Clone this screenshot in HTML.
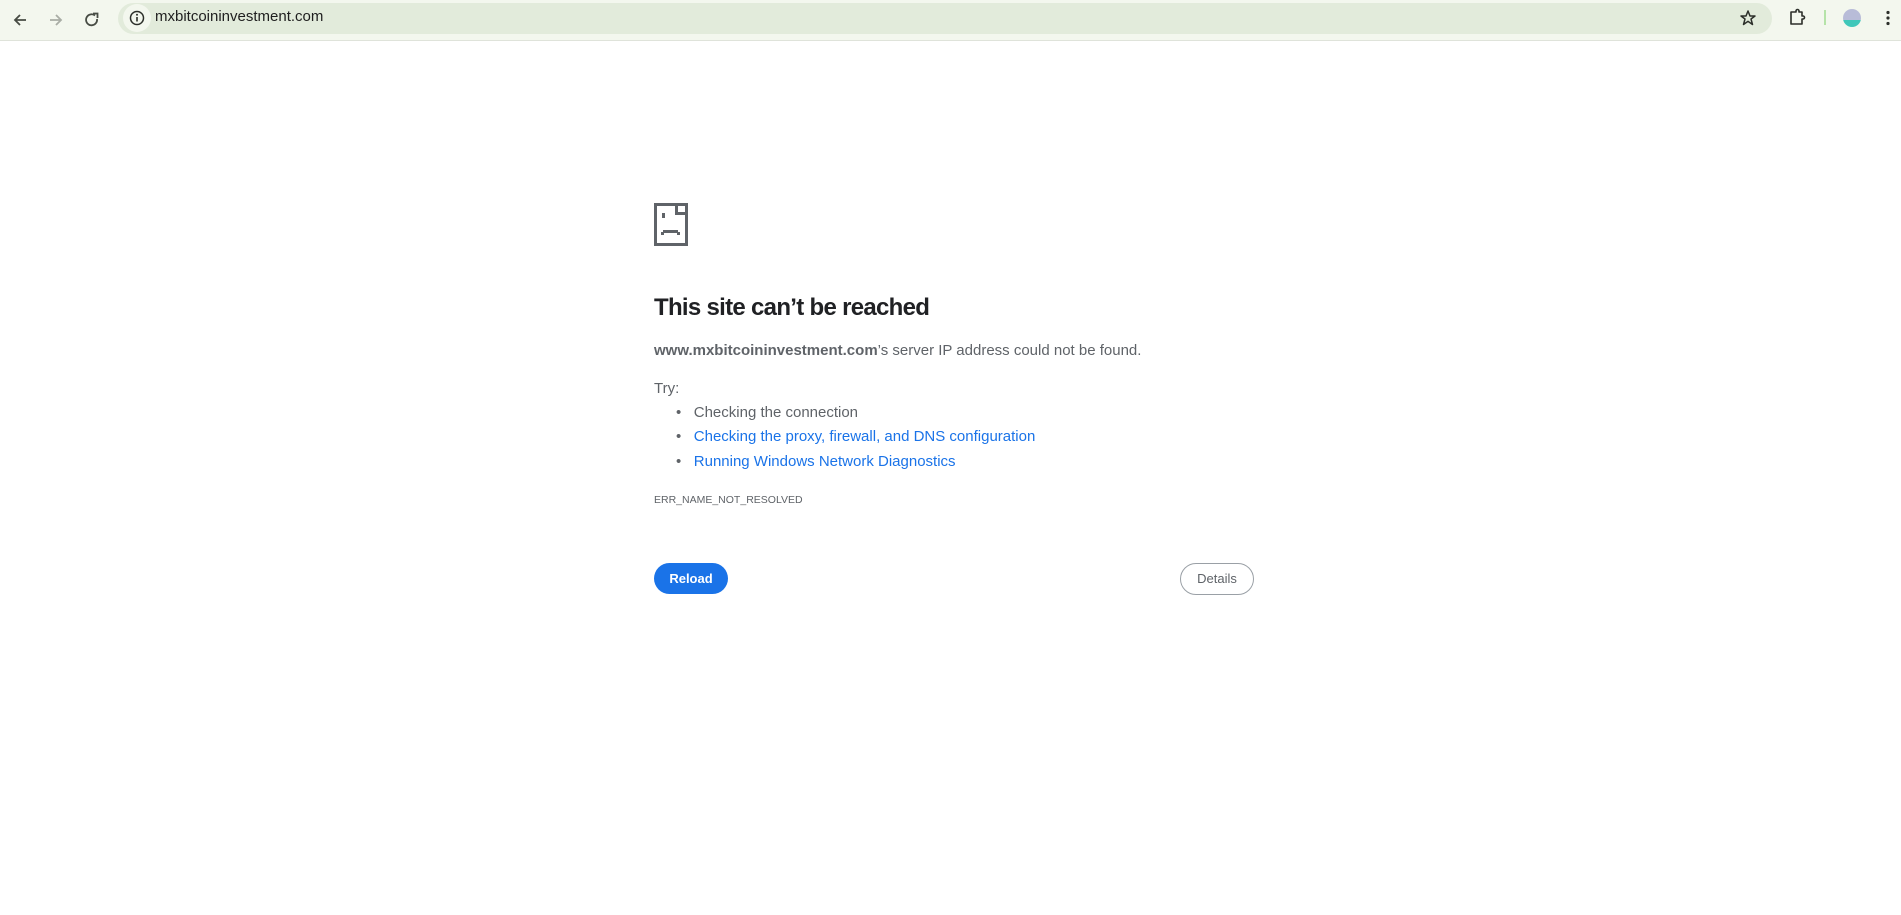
<!DOCTYPE html>
<html><head><meta charset="utf-8"><style>
body{margin:0;width:1901px;height:915px;background:#fff;font-family:"Liberation Sans",sans-serif;position:relative;overflow:hidden}
.bar{position:absolute;left:0;top:0;width:1901px;height:40px;background:#f3f7ee;border-bottom:1px solid #dfe3da}
.omni{position:absolute;left:118px;top:3px;width:1654px;height:31px;border-radius:16px;background:#e2ebdb}
.abs{position:absolute}
.t{position:absolute;left:654px;color:#5f6368;font-size:15px;white-space:nowrap}
a{color:#1a73e8;text-decoration:none}
</style></head><body>
<div class="bar">
 <svg class="abs" style="left:10px;top:10px" width="20" height="20" viewBox="0 0 20 20"><path d="M16 10H5M10 5L5 10L10 15" stroke="#474c44" stroke-width="1.8" fill="none"/></svg>
 <svg class="abs" style="left:46px;top:10px" width="20" height="20" viewBox="0 0 20 20"><path d="M4 10H15M10 5L15 10L10 15" stroke="#a9ada5" stroke-width="1.8" fill="none"/></svg>
 <svg class="abs" style="left:82px;top:10px" width="20" height="20" viewBox="0 0 20 20"><path d="M15 9A5.5 5.5 0 1 1 13 5.5" stroke="#474c44" stroke-width="1.8" fill="none"/><path d="M11 3.5H15.5V8" stroke="#474c44" stroke-width="1.8" fill="none"/></svg>
 <div class="omni"></div>
 <div class="abs" style="left:123px;top:4px;width:28px;height:28px;border-radius:14px;background:#f3f7ee"></div>
 <svg class="abs" style="left:128px;top:9px" width="18" height="18" viewBox="0 0 18 18"><circle cx="9" cy="9" r="6.5" stroke="#2c2f2a" stroke-width="1.5" fill="none"/><path d="M9 8V12.5" stroke="#2c2f2a" stroke-width="1.6"/><circle cx="9" cy="5.8" r="1" fill="#2c2f2a"/></svg>
 <div class="abs" style="left:155px;top:8px;font-size:15px;color:#1f1f1f">mxbitcoininvestment.com</div>
 <svg class="abs" style="left:1738px;top:8px" width="20" height="20" viewBox="0 0 20 20"><path d="M10 3L12 8H17L13 11L14.5 16.5L10 13.3L5.5 16.5L7 11L3 8H8Z" stroke="#2c2f2a" stroke-width="1.5" fill="none" stroke-linejoin="round"/></svg>
 <svg class="abs" style="left:1788px;top:8px" width="20" height="20" viewBox="0 0 20 20"><path d="M3 4H8V3A1.5 1.5 0 0 1 11 3V4H14V8H15A1.5 1.5 0 0 1 15 11H14V16H3Z" stroke="#2c2f2a" stroke-width="1.6" fill="none" stroke-linejoin="round"/></svg>
 <div class="abs" style="left:1824px;top:10px;width:2px;height:15px;background:#b5e3a8"></div>
 <div class="abs" style="left:1843px;top:9px;width:18px;height:18px;border-radius:9px;background:linear-gradient(#b8bcd8 60%,#3fc7b9 60%)"></div>
 <svg class="abs" style="left:1878px;top:8px" width="20" height="20" viewBox="0 0 20 20"><circle cx="10" cy="4.5" r="1.6" fill="#2c2f2a"/><circle cx="10" cy="10" r="1.6" fill="#2c2f2a"/><circle cx="10" cy="15.5" r="1.6" fill="#2c2f2a"/></svg>
</div>
<svg class="abs" style="left:654px;top:203px" width="34" height="43" viewBox="0 0 34 43"><path d="M1.5 1.5H22.5V10.5H32.5V41.5H1.5Z M22.5 1.5H32.5V10.5" stroke="#5f6368" stroke-width="3" fill="none"/><rect x="8" y="10" width="3" height="5" fill="#5f6368"/><rect x="9" y="27" width="15" height="3" fill="#5f6368"/><rect x="7" y="29" width="3" height="3" fill="#5f6368"/><rect x="23" y="29" width="3" height="3" fill="#5f6368"/></svg>
<div class="t" style="top:294px;font-size:24px;font-weight:bold;color:#202124;letter-spacing:-0.7px">This site can’t be reached</div>
<div class="t" style="top:342px"><b style="color:#5f6368">www.mxbitcoininvestment.com</b>’s server IP address could not be found.</div>
<div class="t" style="top:380px">Try:</div>
<div class="t" style="top:404px;left:676px">•&nbsp;&nbsp;&nbsp;Checking the connection</div>
<div class="t" style="top:428px;left:676px">•&nbsp;&nbsp;&nbsp;<a>Checking the proxy, firewall, and DNS configuration</a></div>
<div class="t" style="top:453px;left:676px">•&nbsp;&nbsp;&nbsp;<a>Running Windows Network Diagnostics</a></div>
<div class="t" style="top:494px;font-size:10.5px">ERR_NAME_NOT_RESOLVED</div>
<div class="abs" style="left:654px;top:563px;width:74px;height:31px;border-radius:16px;background:#1a73e8;color:#fff;font-size:13px;font-weight:bold;text-align:center;line-height:31px">Reload</div>
<div class="abs" style="left:1180px;top:563px;width:72px;height:30px;border-radius:16px;border:1px solid #9aa0a6;color:#5f6368;font-size:13px;text-align:center;line-height:30px">Details</div>
</body></html>
